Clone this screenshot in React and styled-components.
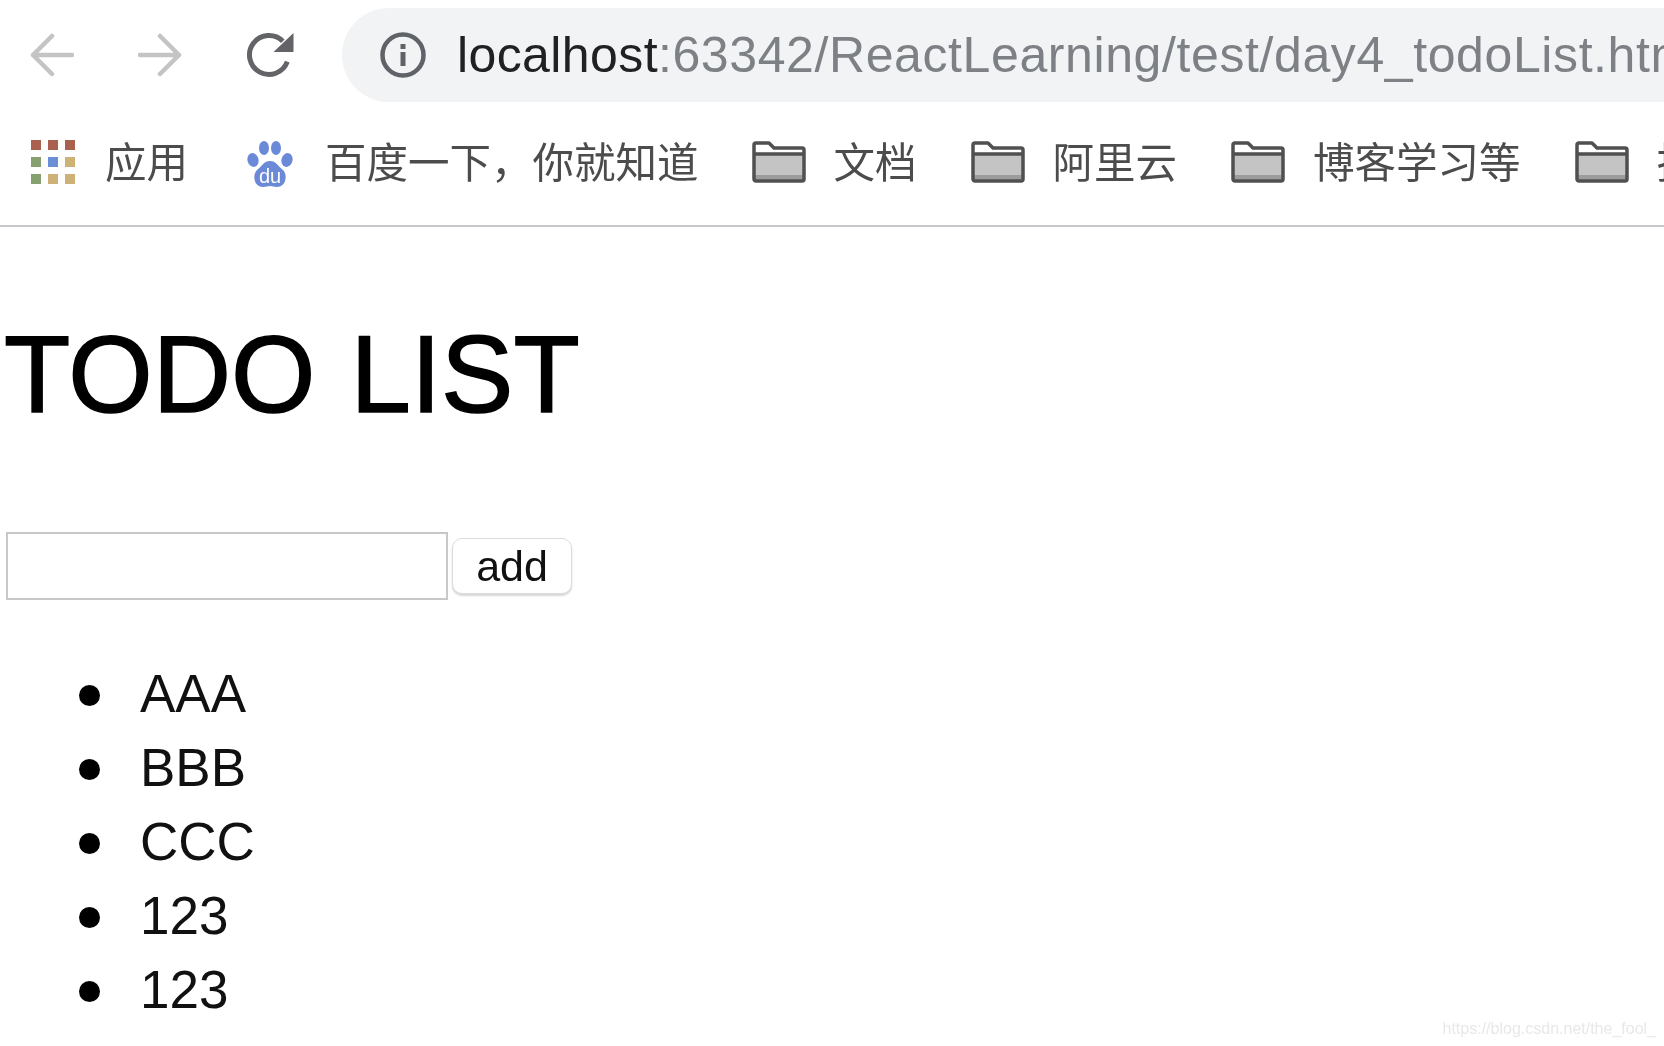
import styled, { createGlobalStyle } from 'styled-components'

const GlobalStyle = createGlobalStyle`
  html, body {
    margin: 0;
    padding: 0;
    background: #fff;
    overflow: hidden;
  }

  * {
    box-sizing: border-box;
  }
`

// the reference is an upscaled screenshot, everything in it is a bit soft
const Page = styled.div`
  position: relative;
  width: 1664px;
  height: 1046px;
  overflow: hidden;
  font-family: "Liberation Sans", "Noto Sans CJK SC", sans-serif;
  color: #000;
  filter: blur(0.5px);
`

const Toolbar = styled.div`
  display: flex;
  align-items: center;
  height: 110px;
  padding: 8px 0 8px 30px;
`

const NavIcon = styled.svg`
  flex: none;
  width: ${props => props.$size || 44}px;
  height: ${props => props.$size || 44}px;
  margin-right: ${props => props.$gap}px;
`

const AddressBar = styled.div`
  flex: none;
  display: flex;
  align-items: center;
  gap: 31px;
  width: 1400px;
  height: 94px;
  padding-left: 38px;
  border-radius: 47px;
  background: #f1f3f4;
  white-space: nowrap;
  font-size: 50px;
  letter-spacing: 0.6px;
`

const InfoGlyph = styled.svg`
  flex: none;
  width: 46px;
  height: 46px;
`

const Host = styled.span`
  color: #202124;
  letter-spacing: 0.4px;
`

const UrlRest = styled.span`
  color: #7d8084;
`

const BookmarkBar = styled.div`
  display: flex;
  align-items: center;
  height: 117px;
  padding: 0 0 16px 30px;
  border-bottom: 2px solid #c8c8cc;
  white-space: nowrap;
`

const Bookmark = styled.div`
  flex: none;
  display: flex;
  align-items: center;
  gap: ${props => props.$gap || 28}px;
  margin-right: ${props => props.$after || 54}px;
  font-size: 41.5px;
  color: #4c4c4c;
`

const BookmarkGlyph = styled.svg`
  flex: none;
  margin-top: ${props => props.$drop || 0}px;
`

const Content = styled.main`
  padding: 0 0 0 6px;
`

const Title = styled.h1`
  margin: 83px 0 0 -2px;
  font-size: 108.5px;
  line-height: 130px;
  font-weight: 400;
  word-spacing: 5px;
  -webkit-text-stroke: 1.5px #000;
`

const Form = styled.div`
  display: flex;
  align-items: center;
  gap: 4px;
  margin-top: 92px;
`

const TextInput = styled.input`
  width: 442px;
  height: 68px;
  border: 2px solid #c8c8c8;
  background: #fff;
`

const AddButton = styled.button`
  width: 120px;
  height: 56px;
  padding: 0;
  border: 1px solid #dcdcdc;
  border-radius: 10px;
  background: #fff;
  box-shadow: 0 2px 2px rgba(0, 0, 0, 0.16);
  font-family: inherit;
  font-size: 43px;
  color: #111;
`

const TodoList = styled.ul`
  margin: 57px 0 0;
  padding: 0 0 0 134px;
  list-style: none;
`

const TodoItem = styled.li`
  position: relative;
  height: 74px;
  font-size: 53px;
  line-height: 74px;
  color: #111;

  &::before {
    content: '';
    position: absolute;
    left: -61px;
    top: 28px;
    width: 21px;
    height: 21px;
    border-radius: 50%;
    background: #000;
  }
`

const Watermark = styled.div`
  position: absolute;
  right: 8px;
  bottom: 8px;
  font-size: 16px;
  color: #e8e8e8;
`

function BackIcon() {
  return (
    <NavIcon $gap={64} viewBox="0 0 44 44" fill="none" stroke="#c4c4c4" strokeWidth="4.5" strokeLinecap="round" strokeLinejoin="round">
      <path d="M42 22H3M22 3L3 22l19 19" />
    </NavIcon>
  )
}

function ForwardIcon() {
  return (
    <NavIcon $gap={65} viewBox="0 0 44 44" fill="none" stroke="#c4c4c4" strokeWidth="4.5" strokeLinecap="round" strokeLinejoin="round">
      <path d="M2 22h39M22 3l19 19-19 19" />
    </NavIcon>
  )
}

function ReloadIcon() {
  return (
    <NavIcon $gap={48} $size={47} viewBox="0 0 47 47">
      <path d="M35.800 9.200A19.500 19.500 0 1 0 40.300 29.700" fill="none" stroke="#636468" strokeWidth="5" />
      <path d="M46.500 1v19h-20z" fill="#636468" />
    </NavIcon>
  )
}

function InfoIcon() {
  return (
    <InfoGlyph viewBox="0 0 46 46">
      <circle cx="23" cy="23" r="20.5" fill="none" stroke="#5f6368" strokeWidth="4.5" />
      <rect x="20.5" y="20" width="5" height="14" fill="#5f6368" />
      <rect x="20.5" y="12" width="5" height="5" fill="#5f6368" />
    </InfoGlyph>
  )
}

const appColors = [
  '#a9604e', '#a9604e', '#a9604e',
  '#87a070', '#6a8fd6', '#cdb176',
  '#87a070', '#cdb176', '#cdb176',
]

function AppsIcon() {
  return (
    <BookmarkGlyph $drop={4} width="46" height="46" viewBox="0 0 46 46">
      {appColors.map((color, i) => (
        <rect key={i} x={1 + (i % 3) * 17} y={1 + Math.floor(i / 3) * 17} width="10" height="10" fill={color} />
      ))}
    </BookmarkGlyph>
  )
}

function BaiduIcon() {
  return (
    <BookmarkGlyph $drop={10} width="47" height="48" viewBox="0 0 47 48">
      <g fill="#6a8ad8">
        <ellipse cx="7" cy="19" rx="5.5" ry="7" transform="rotate(-15 7 19)" />
        <ellipse cx="18" cy="7" rx="5" ry="7" />
        <ellipse cx="30" cy="7" rx="5" ry="7" />
        <ellipse cx="41" cy="19" rx="5.5" ry="7" transform="rotate(15 41 19)" />
        <path d="M24 20c6 0 8 5 13 9 5 5 3 17-6 17-3 0-5-1-7-1s-4 1-7 1C8 46 6 34 11 29c5-4 7-9 13-9z" />
      </g>
      <text x="24" y="42" textAnchor="middle" fontFamily="Liberation Sans, sans-serif" fontSize="20" fill="#fff">du</text>
    </BookmarkGlyph>
  )
}

function FolderIcon() {
  return (
    <BookmarkGlyph $drop={4} width="54" height="42" viewBox="0 0 54 42">
      <path d="M2 12h50v26a2 2 0 0 1-2 2H4a2 2 0 0 1-2-2z" fill="#c4c4c4" />
      <path d="M3 34h48v5H3z" fill="#9c9c9c" />
      <path
        d="M2 38V4a2 2 0 0 1 2-2h13l5 5h28a2 2 0 0 1 2 2v29a2 2 0 0 1-2 2H4a2 2 0 0 1-2-2zM2 13h50"
        fill="none"
        stroke="#505050"
        strokeWidth="3.5"
        strokeLinejoin="round"
      />
    </BookmarkGlyph>
  )
}

const folders = ['文档', '阿里云', '博客学习等', '技术']

const todos = ['AAA', 'BBB', 'CCC', '123', '123']

function App() {
  return (
    <Page>
      <GlobalStyle />
      <Toolbar>
        <BackIcon />
        <ForwardIcon />
        <ReloadIcon />
        <AddressBar>
          <InfoIcon />
          <div>
            <Host>localhost</Host>
            <UrlRest>:63342/ReactLearning/test/day4_todoList.html</UrlRest>
          </div>
        </AddressBar>
      </Toolbar>
      <BookmarkBar>
        <Bookmark $gap={29} $after={58}>
          <AppsIcon />
          应用
        </Bookmark>
        <Bookmark $gap={32} $after={53}>
          <BaiduIcon />
          百度一下，你就知道
        </Bookmark>
        {folders.map(name => (
          <Bookmark key={name}>
            <FolderIcon />
            {name}
          </Bookmark>
        ))}
      </BookmarkBar>
      <Content>
        <Title>TODO LIST</Title>
        <Form>
          <TextInput type="text" />
          <AddButton>add</AddButton>
        </Form>
        <TodoList>
          {todos.map((todo, i) => (
            <TodoItem key={i}>{todo}</TodoItem>
          ))}
        </TodoList>
      </Content>
      <Watermark>https://blog.csdn.net/the_fool_</Watermark>
    </Page>
  )
}

export default App
